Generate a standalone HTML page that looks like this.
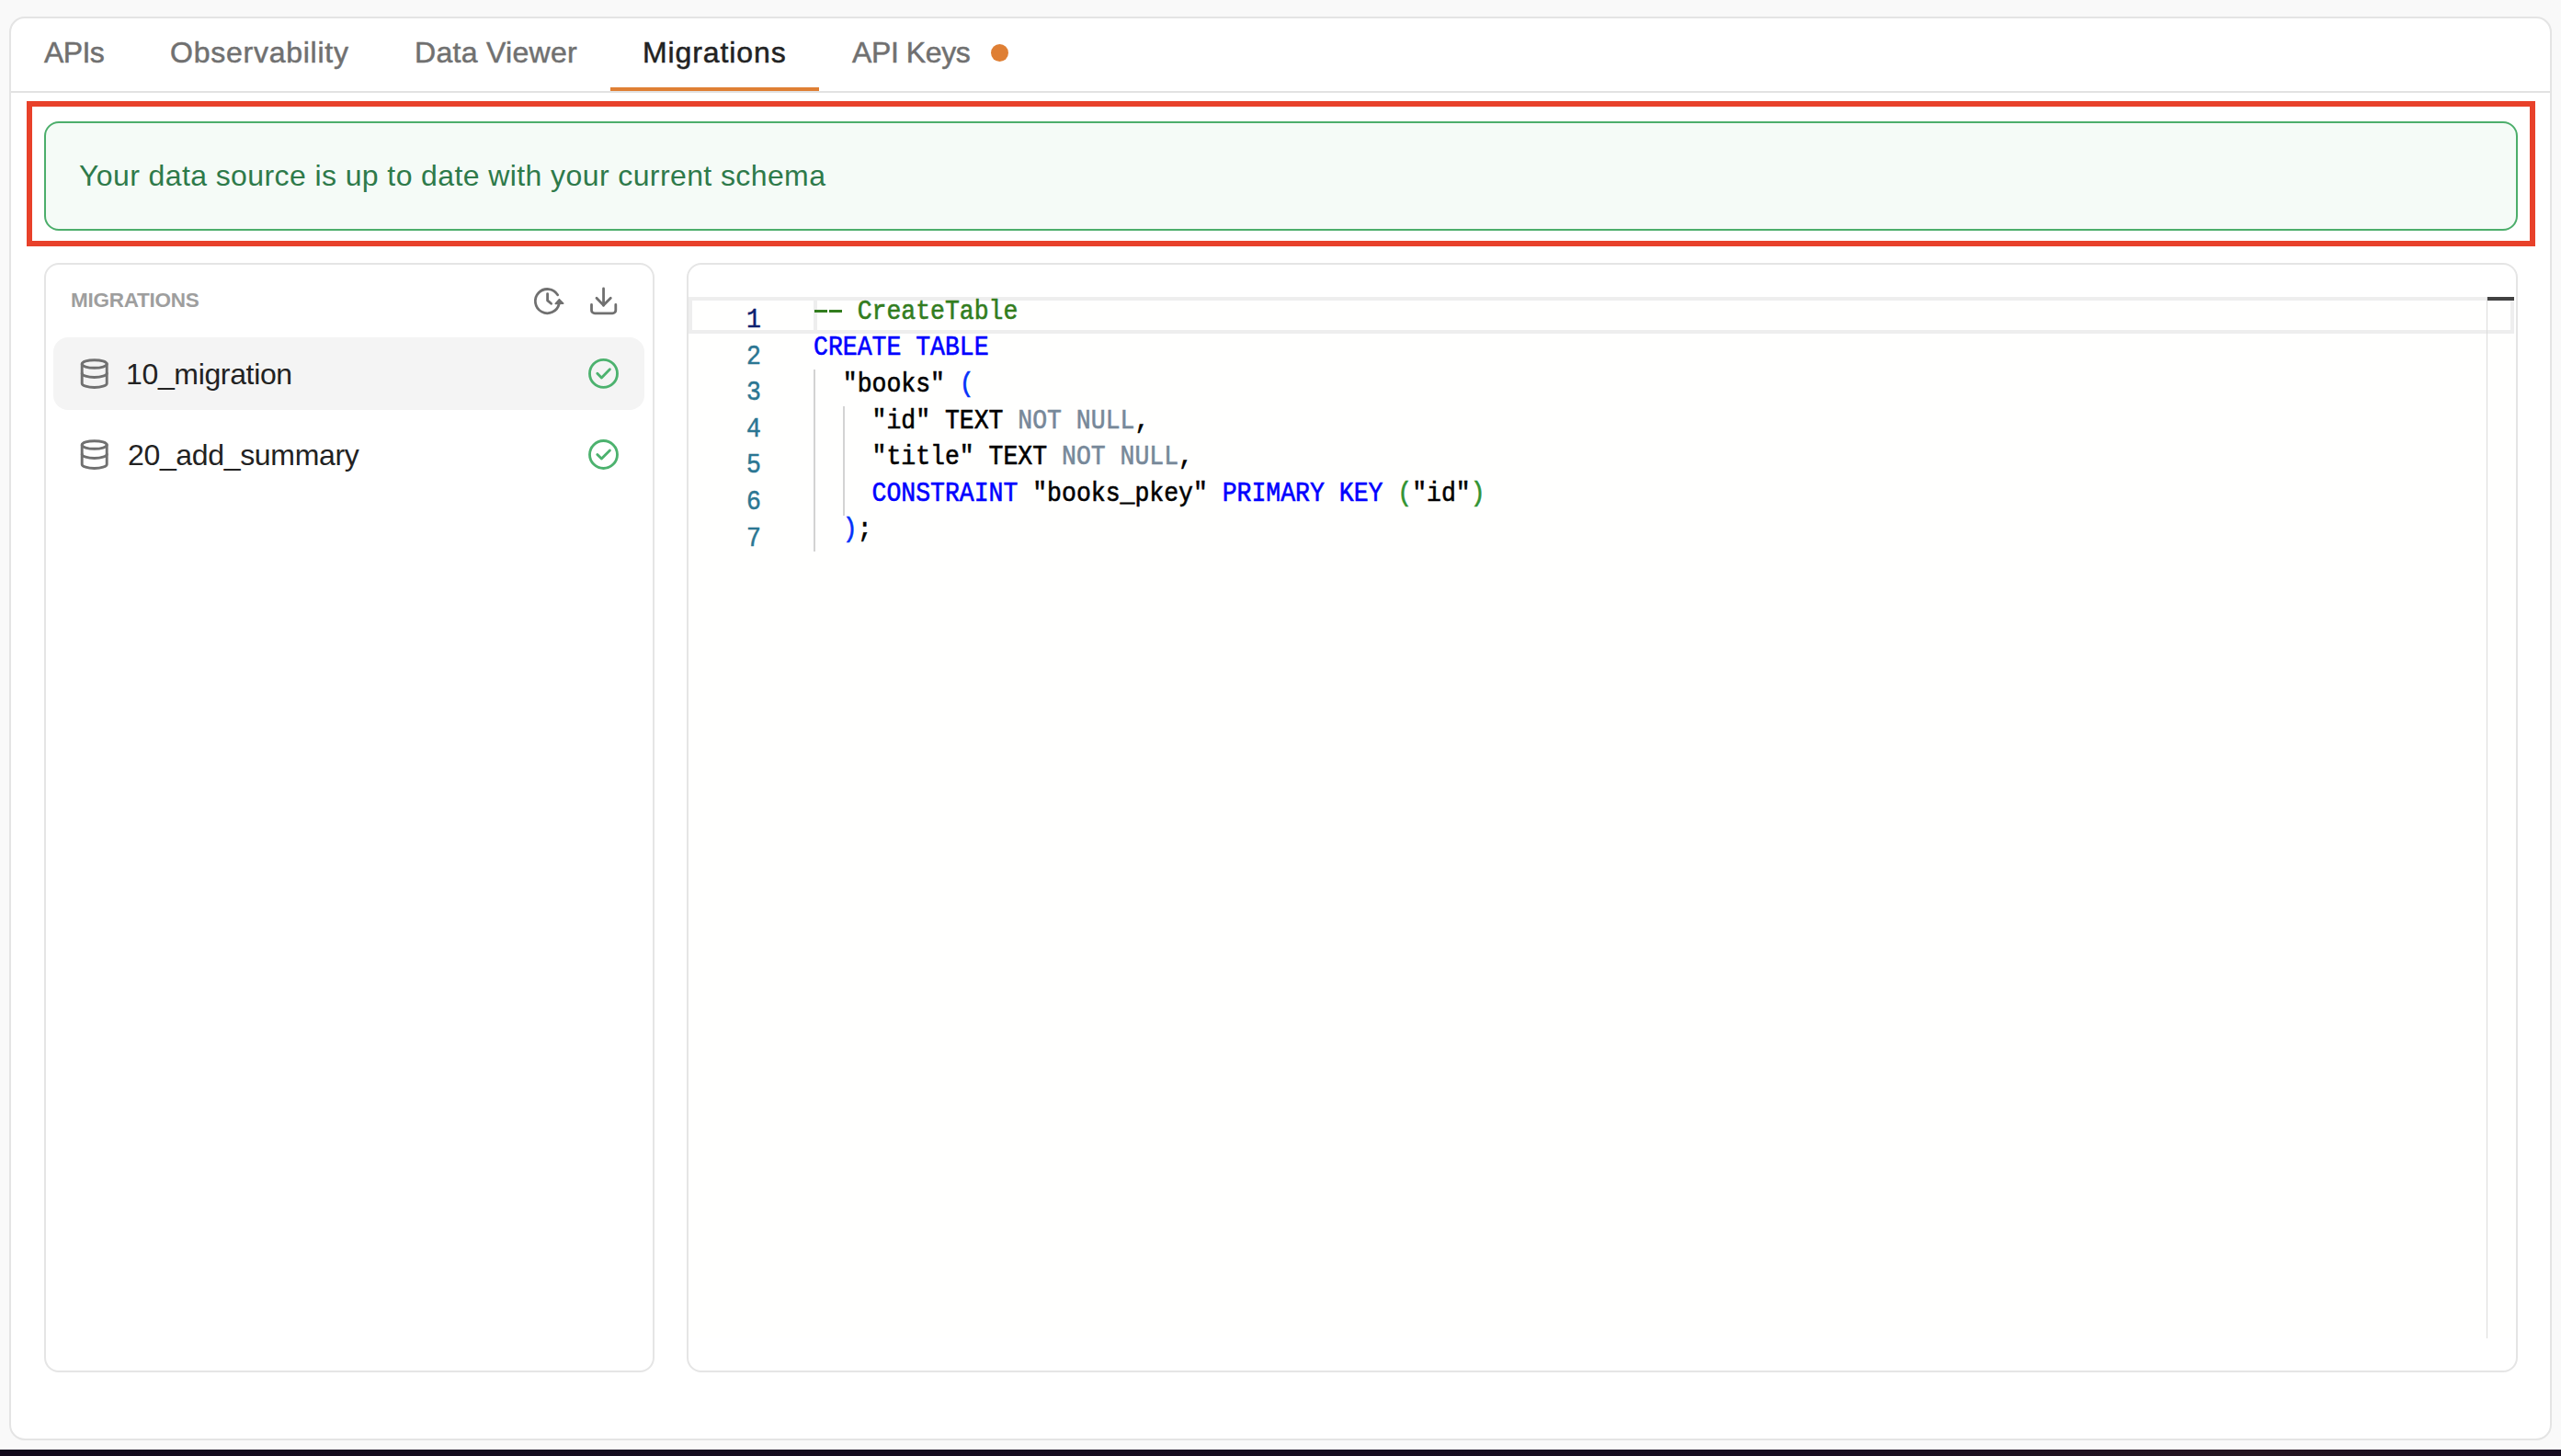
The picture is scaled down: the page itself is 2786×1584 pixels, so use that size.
<!DOCTYPE html>
<html><head><meta charset="utf-8">
<style>
*{box-sizing:border-box;margin:0;padding:0}
html,body{width:2786px;height:1584px;overflow:hidden;background:#f9f9f9;font-family:"Liberation Sans",sans-serif}
.abs{position:absolute}
.t{position:absolute;white-space:pre;line-height:1}
#card{left:10px;top:18px;width:2766px;height:1549px;border:2px solid #e4e4e4;border-radius:17px;background:#fff}
#hline{left:12px;top:99px;width:2762px;height:2px;background:#e2e2e2}
.tab{font-size:32px;color:#707070;top:41px;-webkit-text-stroke:0.5px currentColor}
#uline{left:664px;top:95px;width:227px;height:4px;background:#df7f34}
#dot{left:1078px;top:48px;width:19px;height:19px;border-radius:50%;background:#df7f34}
#red{left:29px;top:110px;width:2729px;height:158px;border:6px solid #e8412a}
#green{left:48px;top:132px;width:2691px;height:119px;border:2px solid #4cae6b;border-radius:16px;background:#f5fbf7}
#bannertxt{left:86px;top:175px;font-size:32px;color:#2e7a4a;letter-spacing:0.4px}
#lp{left:48px;top:286px;width:664px;height:1207px;border:2px solid #e5e5e5;border-radius:16px;background:#fff}
#ed{left:747px;top:286px;width:1992px;height:1207px;border:2px solid #e5e5e5;border-radius:16px;background:#fff}
#mig{left:77px;top:316px;font-size:22.5px;font-weight:bold;color:#9e9e9e;letter-spacing:-0.25px}
#row1{left:58px;top:367px;width:643px;height:79px;border-radius:16px;background:#f4f4f4}
.item{font-size:32px;color:#222}
#bottombar{left:0;top:1577px;width:2786px;height:7px;background:linear-gradient(90deg,#120a1c 0%,#160c20 70%,#24141f 88%,#1a0e20 95%,#150b1f 100%)}
#whiteline{left:0;top:1575px;width:2786px;height:2px;background:#fff}
/* editor */
#code{left:749px;top:323px;width:1988px;height:1133px;background:#fffffe}
.cl{position:absolute;border:4px solid #eeeeee}
.ln{position:absolute;font-family:"Liberation Mono",monospace;font-size:29px;line-height:39.55px;color:#2b7692;text-align:right;width:80px;white-space:pre;transform:scaleX(0.9126);transform-origin:right top;-webkit-text-stroke:0.5px currentColor}
.code{position:absolute;font-family:"Liberation Mono",monospace;font-size:29px;line-height:39.55px;color:#000;white-space:pre;transform:scaleX(0.9126);transform-origin:left top;-webkit-text-stroke:0.6px currentColor}
.kw{color:#0000ff}.cm{color:#327d1e}.op{color:#778899}.b1{color:#0431fa}.b2{color:#319331}
.guide{position:absolute;width:2px;background:#d3d3d3}
</style></head>
<body>
<div id="card" class="abs"></div>
<div id="hline" class="abs"></div>
<div class="t tab" style="left:48px;letter-spacing:-0.6px">APIs</div>
<div class="t tab" style="left:185px;letter-spacing:0.75px">Observability</div>
<div class="t tab" style="left:451px;letter-spacing:0.3px">Data Viewer</div>
<div class="t tab" style="left:699px;color:#222;letter-spacing:0.9px">Migrations</div>
<div class="t tab" style="left:927px;letter-spacing:-0.4px">API Keys</div>
<div id="dot" class="abs"></div>
<div id="uline" class="abs"></div>

<div id="red" class="abs"></div>
<div id="green" class="abs"></div>
<div id="bannertxt" class="t">Your data source is up to date with your current schema</div>

<div id="lp" class="abs"></div>
<div id="mig" class="t">MIGRATIONS</div>
<div id="row1" class="abs"></div>
<div class="t item" style="left:137px;top:391px;letter-spacing:-0.35px">10_migration</div>
<div class="t item" style="left:139px;top:479px;letter-spacing:-0.34px">20_add_summary</div>

<div id="ed" class="abs"></div>
<div id="code" class="abs"></div>
<div class="cl" style="left:749px;top:323px;width:136px;height:40px;border-right:0"></div>
<div class="cl" style="left:885px;top:323px;width:1850px;height:40px"></div>
<div class="abs" style="left:2705px;top:323px;width:1px;height:1133px;background:#dcdcdc"></div>
<div class="abs" style="left:2706px;top:323px;width:29px;height:4px;background:#424242"></div>
<div class="guide" style="left:885px;top:402px;height:198px"></div>
<div class="guide" style="left:917px;top:442px;height:119px"></div>
<div class="ln" style="left:748px;top:329.20px;color:#0b216f">1</div>
<div class="code" style="left:885px;top:319.90px"><span class="cm">   CreateTable</span></div>
<div class="ln" style="left:748px;top:368.75px;color:#2b7692">2</div>
<div class="code" style="left:885px;top:359.45px"><span class="kw">CREATE TABLE</span></div>
<div class="ln" style="left:748px;top:408.30px;color:#2b7692">3</div>
<div class="code" style="left:885px;top:399.00px">  "books" <span class="b1">(</span></div>
<div class="ln" style="left:748px;top:447.85px;color:#2b7692">4</div>
<div class="code" style="left:885px;top:438.55px">    "id" TEXT <span class="op">NOT NULL</span>,</div>
<div class="ln" style="left:748px;top:487.40px;color:#2b7692">5</div>
<div class="code" style="left:885px;top:478.10px">    "title" TEXT <span class="op">NOT NULL</span>,</div>
<div class="ln" style="left:748px;top:526.95px;color:#2b7692">6</div>
<div class="code" style="left:885px;top:517.65px">    <span class="kw">CONSTRAINT</span> "books_pkey" <span class="kw">PRIMARY KEY</span> <span class="b2">(</span>"id"<span class="b2">)</span></div>
<div class="ln" style="left:748px;top:566.50px;color:#2b7692">7</div>
<div class="code" style="left:885px;top:557.20px">  <span class="b1">)</span>;</div>

<svg class="abs" style="left:0;top:0" width="2786" height="1584" viewBox="0 0 2786 1584" fill="none" stroke-linecap="round" stroke-linejoin="round">
<g stroke="#707070" stroke-width="2.8">
<path d="M606.7 320.9 A13.1 13.1 0 1 0 608.2 330.6"/>
<path d="M595.6 319.6 V326.9 L599.6 330.3"/>
<path d="M608.4 325.8 L604.4 330.3 L612.6 330.1 Z" fill="#707070" stroke-width="1.8"/>
<path d="M656.55 314 V332.3"/>
<path d="M649 324.3 L656.55 332.1 L664.3 324.3"/>
<path d="M643.5 331.4 V337.4 A3.5 3.5 0 0 0 647 340.9 H666.3 A3.5 3.5 0 0 0 669.8 337.4 V331.4"/>
</g>
<g stroke="#707070" stroke-width="2.9">
<ellipse cx="102.7" cy="396.0" rx="13.5" ry="4.3"/>
<path d="M89.2 396 V417.2 A13.5 4.3 0 0 0 116.2 417.2 V396"/>
<path d="M89.2 406.2 A13.5 4.3 0 0 0 116.2 406.2"/>
<g transform="translate(0,88)">
<ellipse cx="102.7" cy="396.0" rx="13.5" ry="4.3"/>
<path d="M89.2 396 V417.2 A13.5 4.3 0 0 0 116.2 417.2 V396"/>
<path d="M89.2 406.2 A13.5 4.3 0 0 0 116.2 406.2"/>
</g>
</g>
<g stroke="#4cb26e" stroke-width="2.85">
<circle cx="656.5" cy="406.4" r="15"/>
<path d="M649.8 406.3 L654.4 411 L663.4 401.8"/>
<g transform="translate(0,88.1)">
<circle cx="656.5" cy="406.4" r="15"/>
<path d="M649.8 406.3 L654.4 411 L663.4 401.8"/>
</g>
</g>
</svg>
<div class="abs" style="left:886px;top:337px;width:14px;height:3px;background:#327d1e"></div>
<div class="abs" style="left:902px;top:337px;width:14px;height:3px;background:#327d1e"></div>
<div id="whiteline" class="abs"></div>
<div id="bottombar" class="abs"></div>
</body></html>
